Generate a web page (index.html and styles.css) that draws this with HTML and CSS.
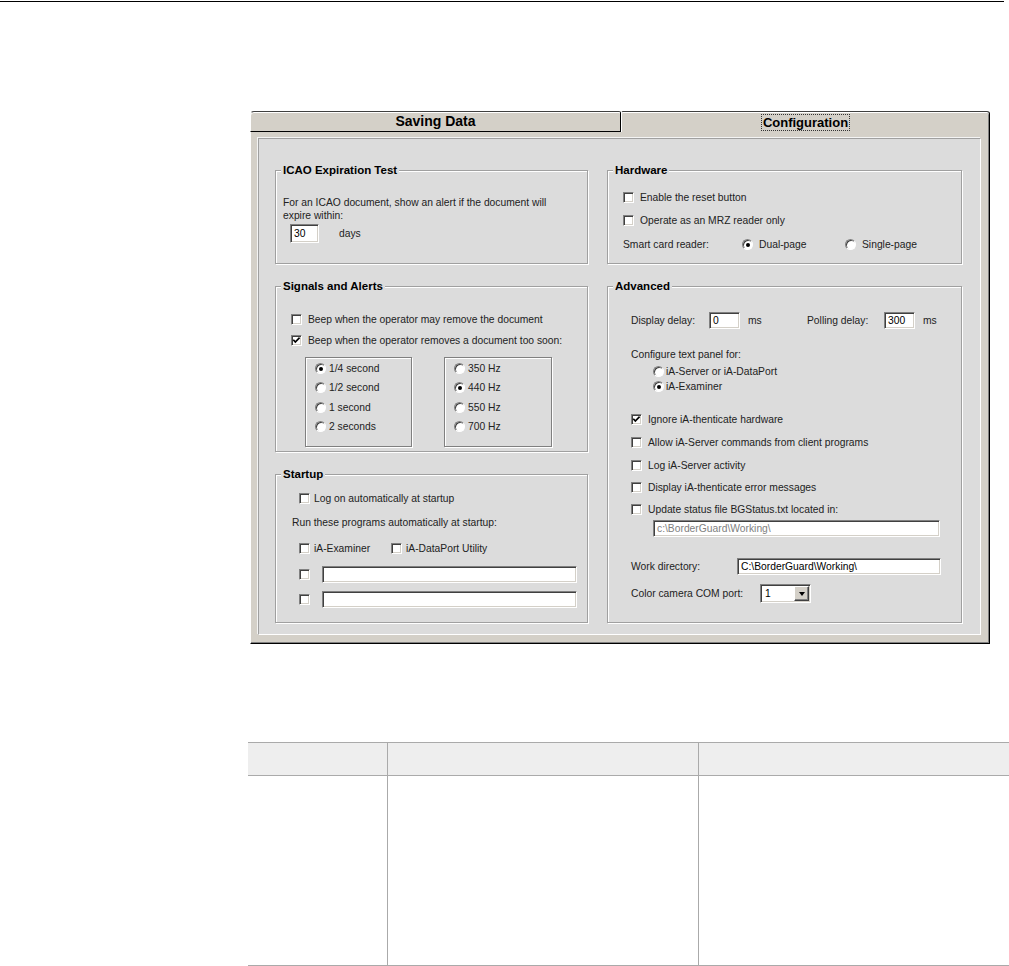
FILE: index.html
```html
<!DOCTYPE html>
<html>
<head>
<meta charset="utf-8">
<title>Configuration</title>
<link rel="stylesheet" href="styles.css">
</head>
<body>
<div class="rule"></div>
<div class="dialog">
  <div class="tabs">
    <div class="tab tab-off">Saving Data</div>
    <div class="tab tab-on"><span class="focus">Configuration</span></div>
  </div>
  <div class="tabbody">
    <div class="panel">
      <div class="col col-l">
        <div class="group g-icao">
          <span class="title">ICAO Expiration Test</span>
          <p class="txt">For an ICAO document, show an alert if the document will<br>expire within:</p>
          <div class="row days-row"><span class="input w29">30</span><span class="days">days</span></div>
        </div>
        <div class="group g-sig">
          <span class="title">Signals and Alerts</span>
          <div class="row"><span class="chk"></span>Beep when the operator may remove the document</div>
          <div class="row mt6"><span class="chk"><svg width="9" height="9" viewBox="0 0 9 9"><polyline points="1.3,3.8 3.3,6 7.6,1.6" fill="none" stroke="#000" stroke-width="1.7"/></svg></span>Beep when the operator removes a document too soon:</div>
          <div class="subs">
            <div class="sub sub1">
              <div class="srow"><span class="rad on"></span>1/4 second</div>
              <div class="srow"><span class="rad"></span>1/2 second</div>
              <div class="srow"><span class="rad"></span>1 second</div>
              <div class="srow"><span class="rad"></span>2 seconds</div>
            </div>
            <div class="sub sub2">
              <div class="srow"><span class="rad"></span>350 Hz</div>
              <div class="srow"><span class="rad on"></span>440 Hz</div>
              <div class="srow"><span class="rad"></span>550 Hz</div>
              <div class="srow"><span class="rad"></span>700 Hz</div>
            </div>
          </div>
        </div>
        <div class="group g-start">
          <span class="title">Startup</span>
          <div class="row"><span class="chk"></span>Log on automatically at startup</div>
          <p class="txt run">Run these programs automatically at startup:</p>
          <div class="row mt12"><span class="chk"></span><span class="prog">iA-Examiner</span><span class="chk"></span>iA-DataPort Utility</div>
          <div class="row h17 mt10"><span class="chk"></span><span class="input w255"></span></div>
          <div class="row h17 mt8"><span class="chk"></span><span class="input w255"></span></div>
        </div>
      </div>
      <div class="col col-r">
        <div class="group g-hw">
          <span class="title">Hardware</span>
          <div class="row"><span class="chk"></span>Enable the reset button</div>
          <div class="row mt8"><span class="chk"></span>Operate as an MRZ reader only</div>
          <div class="row mt9"><span class="scr">Smart card reader:</span><span class="opt"><span class="rad on"></span>Dual-page</span><span class="rad"></span>Single-page</div>
        </div>
        <div class="group g-adv">
          <span class="title">Advanced</span>
          <div class="row h17"><span class="lbl-dd">Display delay:</span><span class="input w31">0</span><span class="ms">ms</span><span class="lbl-pd">Polling delay:</span><span class="input w31">300</span><span class="ms2">ms</span></div>
          <p class="txt cfg">Configure text panel for:</p>
          <div class="row mt3 ind"><span class="rad"></span>iA-Server or iA-DataPort</div>
          <div class="row ind"><span class="rad on"></span>iA-Examiner</div>
          <div class="row mt18"><span class="chk"><svg width="9" height="9" viewBox="0 0 9 9"><polyline points="1.3,3.8 3.3,6 7.6,1.6" fill="none" stroke="#000" stroke-width="1.7"/></svg></span>Ignore iA-thenticate hardware</div>
          <div class="row mt8"><span class="chk"></span>Allow iA-Server commands from client programs</div>
          <div class="row mt8"><span class="chk"></span>Log iA-Server activity</div>
          <div class="row mt7"><span class="chk"></span>Display iA-thenticate error messages</div>
          <div class="row mt7"><span class="chk"></span>Update status file BGStatus.txt located in:</div>
          <div class="row h17 mt3 indent-in"><span class="input w287 dis">c:\BorderGuard\Working\</span></div>
          <div class="row h17 mt21"><span class="lbl-wd">Work directory:</span><span class="input w204">C:\BorderGuard\Working\</span></div>
          <div class="row h19 mt9"><span class="lbl-com">Color camera COM port:</span><span class="select"><span class="val">1</span><span class="btn"><span class="tri"></span></span></span></div>
        </div>
      </div>
    </div>
  </div>
</div>
<table class="grid">
  <colgroup><col class="c1"><col class="c2"><col class="c3"></colgroup>
  <tr><th></th><th></th><th></th></tr>
  <tr><td></td><td></td><td></td></tr>
</table>
</body>
</html>
```
FILE: styles.css
```css
* { box-sizing: border-box; }
body {
  margin: 0;
  font-family: "Liberation Sans", Arial, sans-serif;
  font-size: 10.3px;
  line-height: 13px;
  color: #222;
  background: #fff;
  overflow: hidden;
}
.rule { margin-top: 1px; width: 1004px; height: 1px; background: #000; }

.dialog { margin: 109px 0 0 250px; width: 740px; }
.tabs { display: flex; height: 21px; }
.tab {
  height: 21px;
  display: flex;
  align-items: center;
  justify-content: center;
  background: #d4d0c8;
  border-top: 1px solid #404040;
  color: #000;
}
.tab-off {
  width: 371px;
  border-left: 1px solid #fff;
  border-right: 1px solid #000;
  border-bottom: 1px solid #000;
  border-top-left-radius: 4px;
  border-top-right-radius: 2px;
  box-shadow: inset 0 1px 0 #fff;
  font-weight: bold;
  font-size: 14px;
}
.tab-on {
  width: 369px;
  border-left: 1px solid #fff;
  border-right: 1px solid #000;
  border-top-left-radius: 2px;
  border-top-right-radius: 3px;
  box-shadow: inset 0 1px 0 #fff, inset -1px 0 0 #808080;
  font-weight: bold;
  font-size: 13px;
}
.focus { outline: 1px dotted #333; line-height: 15px; padding: 0 1px; }

.tabbody {
  height: 512px;
  background: #d4d0c8;
  border-left: 1px solid #fff;
  border-right: 1px solid #000;
  border-bottom: 1px solid #000;
  box-shadow: inset -1px 0 0 #808080, inset 0 -1px 0 #808080;
  padding: 6px 8px 0 7px;
}
.panel {
  width: 723px;
  height: 497px;
  background: #dcdcdc;
  border: 1px solid;
  border-color: #a0a0a0 #fff #fff #a0a0a0;
  box-shadow: -1px -1px 0 #f4f4f4;
  padding: 31px 0 0 16px;
  display: flex;
  gap: 19px;
}
.col { display: flex; flex-direction: column; gap: 22px; }
.col-l { width: 313px; }
.col-r { width: 355px; }

.group {
  position: relative;
  border: 1px solid #a0a0a0;
  box-shadow: 1px 1px 0 #fff, inset 1px 1px 0 #fff;
}
.title {
  position: absolute;
  top: -7px;
  left: 5px;
  padding: 0 2px;
  background: #dcdcdc;
  font-weight: bold;
  font-size: 11.5px;
  line-height: 13px;
  color: #000;
}
.g-icao { height: 94px; padding: 25px 0 0 7px; }
.g-sig { height: 166px; padding: 25px 0 0 15px; }
.g-start { height: 149px; padding: 16px 0 0 23px; }
.g-hw { height: 94px; padding: 19px 0 0 15px; }
.g-adv { height: 337px; padding: 25px 0 0 23px; }

.txt { margin: 0; white-space: nowrap; }
.row { display: flex; align-items: center; height: 15px; white-space: nowrap; }
.h17 { height: 17px; }
.h19 { height: 19px; }
.mt3 { margin-top: 3px; }
.mt6 { margin-top: 6px; }
.mt7 { margin-top: 7px; }
.mt8 { margin-top: 8px; }
.mt9 { margin-top: 9px; }
.mt10 { margin-top: 10px; }
.mt12 { margin-top: 12px; }
.mt18 { margin-top: 18px; }
.mt21 { margin-top: 21px; }

.chk {
  flex: none;
  display: inline-flex;
  width: 11px;
  height: 11px;
  margin-right: 6px;
  background: #fff;
  border: 1px solid;
  border-color: #808080 #fff #fff #808080;
  box-shadow: inset 1px 1px 0 #404040, inset -1px -1px 0 #d4d0c8;
}
.chk svg { display: block; }
.rad {
  flex: none;
  position: relative;
  display: inline-block;
  width: 11px;
  height: 11px;
  margin-right: 6px;
  border-radius: 50%;
  background: #fff;
  border: 1px solid;
  border-color: #808080 #fff #fff #808080;
  box-shadow: inset 1px 1px 0 #404040;
}
.rad.on::after {
  content: "";
  position: absolute;
  left: 2.5px;
  top: 2.5px;
  width: 4px;
  height: 4px;
  border-radius: 50%;
  background: #000;
}

.input {
  flex: none;
  display: inline-flex;
  align-items: center;
  background: #fff;
  border: 1px solid;
  border-color: #808080 #fff #fff #808080;
  box-shadow: inset 1px 1px 0 #404040, inset -1px -1px 0 #d4d0c8;
  padding-left: 3px;
  color: #000;
  height: 17px;
  overflow: hidden;
}
.w29 { width: 29px; height: 19px; }
.w31 { width: 31px; }
.w255 { width: 255px; }
.w287 { width: 287px; }
.w204 { width: 204px; }
.dis { color: #808080; }

.days-row { height: 19px; margin-top: 2px; margin-left: 7px; }
.days { margin-left: 20px; }

.subs { display: flex; gap: 32px; margin-top: 9px; margin-left: 14px; }
.sub {
  height: 90px;
  border: 1px solid #808080;
  box-shadow: 1px 1px 0 #fff, inset 1px 1px 0 #fff;
  padding: 1px 0 0 9px;
}
.sub1 { width: 107px; }
.sub2 { width: 108px; }
.srow { display: flex; align-items: center; height: 19.3px; white-space: nowrap; }
.srow .rad { margin-right: 3px; }

.g-start .chk { margin-right: 4px; }
.run { margin: 10px 0 0 -7px; }
.prog { width: 77px; }
.g-start .h17 .chk { margin-right: 12px; }

.scr { width: 119px; }
.opt { display: inline-flex; align-items: center; width: 103px; }

.lbl-dd { width: 78px; }
.ms { margin-left: 8px; width: 59px; }
.lbl-pd { width: 77px; }
.ms2 { margin-left: 8px; }
.cfg { margin-top: 19px; }
.ind { padding-left: 22px; }
.ind .rad { margin-right: 2px; }
.indent-in { padding-left: 22px; }
.lbl-wd { width: 106px; }
.lbl-com { width: 129px; }

.select {
  display: inline-flex;
  align-items: center;
  justify-content: space-between;
  width: 51px;
  height: 19px;
  background: #fff;
  border: 1px solid;
  border-color: #808080 #fff #fff #808080;
  box-shadow: inset 1px 1px 0 #404040, inset -1px -1px 0 #d4d0c8;
  padding: 1px;
  color: #000;
}
.val { padding-left: 3px; }
.btn {
  display: flex;
  align-items: center;
  justify-content: center;
  width: 15px;
  height: 15px;
  background: #d4d0c8;
  border: 1px solid;
  border-color: #fff #404040 #404040 #fff;
  box-shadow: inset -1px -1px 0 #808080;
}
.tri {
  width: 0;
  height: 0;
  border-left: 3.5px solid transparent;
  border-right: 3.5px solid transparent;
  border-top: 4px solid #000;
}

.grid {
  margin: 98px 0 0 248px;
  width: 761px;
  border-collapse: collapse;
  table-layout: fixed;
}
.c1 { width: 139px; }
.c2 { width: 311px; }
.c3 { width: 311px; }
.grid th {
  height: 33px;
  background: #eeeeee;
  border-top: 1px solid #aaa;
  border-bottom: 1px solid #aaa;
  padding: 0;
}
.grid td {
  height: 190px;
  border-bottom: 1px solid #aaa;
  padding: 0;
}
.grid th + th, .grid td + td { border-left: 1px solid #aaa; }
```
